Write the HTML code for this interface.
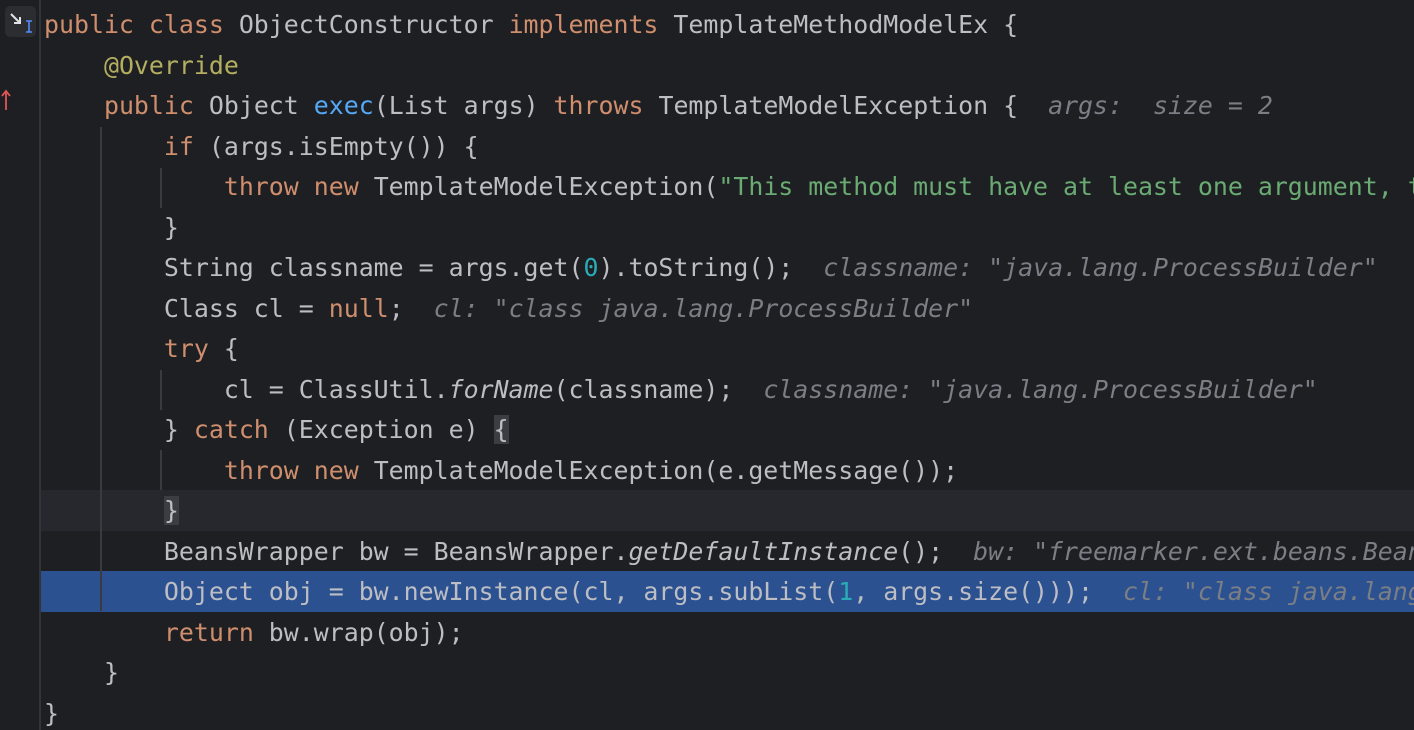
<!DOCTYPE html>
<html><head><meta charset="utf-8"><style>
html,body{margin:0;padding:0;background:#1e1f22;width:1414px;height:730px;overflow:hidden}
body{position:relative;font-family:"DejaVu Sans Mono","Liberation Mono",monospace;font-size:24.9px;color:#bcbec4}
#w{position:absolute;left:0;top:0;width:1414px;height:730px;overflow:hidden}
.l{position:absolute;left:44px;right:0;height:40.5px;line-height:40.5px;white-space:pre;overflow:hidden}
.k{color:#cf8e6d}.f{color:#56a8f5}.s{color:#6aab73}.a{color:#b3ae60}.n{color:#2aacb8}
.i{font-style:italic}.h{color:#7a7e85;font-style:italic}
.bg{position:absolute;left:40px;right:0;height:40.5px}
.g{position:absolute;width:2px;background:#393b40}
</style></head><body><div id="w">
<div class="bg" style="top:490px;background:#26282e"></div>
<div class="bg" style="top:571px;background:#2c5191"></div>
<div class="g" style="left:39px;top:0;height:730px;background:#313438"></div>
<div class="g" style="left:100px;top:127px;height:484px"></div>
<div class="g" style="left:160px;top:168px;height:40px"></div>
<div class="g" style="left:160px;top:370px;height:40px"></div>
<div class="g" style="left:160px;top:450px;height:40px"></div>
<div style="position:absolute;left:5px;top:6px;width:31px;height:31px;background:#2b2d30;border-radius:5px"></div>
<svg style="position:absolute;left:8px;top:10px" width="28" height="26"><path d="M3 4 L12 13 M6 13 H12 V7" stroke="#dfe1e5" stroke-width="2" fill="none"/><path d="M18 11 H24 M21 11 V22 M18 22 H24" stroke="#548af7" stroke-width="1.6" fill="none"/></svg>
<svg style="position:absolute;left:0;top:88px" width="12" height="26"><path d="M6 22 V4 M2 8 L6 3 L10 8" stroke="#e05555" stroke-width="1.8" fill="none"/></svg>
<div class="l" style="top:5px"><span class="k">public class </span>ObjectConstructor <span class="k">implements </span>TemplateMethodModelEx {</div>
<div class="l" style="top:45.5px">    <span class="a">@Override</span></div>
<div class="l" style="top:86px">    <span class="k">public </span>Object <span class="f">exec</span>(List args) <span class="k">throws </span>TemplateModelException {  <span class="h">args:  size = 2</span></div>
<div class="l" style="top:126.5px">        <span class="k">if </span>(args.isEmpty()) {</div>
<div class="l" style="top:167px">            <span class="k">throw new </span>TemplateModelException(<span class="s">"This method must have at least one argument, the name of the class</span></div>
<div class="l" style="top:207.5px">        }</div>
<div class="l" style="top:248px">        String classname = args.get(<span class="n">0</span>).toString();  <span class="h">classname: "java.lang.ProcessBuilder"</span></div>
<div class="l" style="top:288.5px">        Class cl = <span class="k">null</span>;  <span class="h">cl: "class java.lang.ProcessBuilder"</span></div>
<div class="l" style="top:329px">        <span class="k">try </span>{</div>
<div class="l" style="top:369.5px">            cl = ClassUtil.<span class="i">forName</span>(classname);  <span class="h">classname: "java.lang.ProcessBuilder"</span></div>
<div class="l" style="top:410px">        } <span class="k">catch </span>(Exception e) <span style="background:#3b3d42">{</span></div>
<div class="l" style="top:450.5px">            <span class="k">throw new </span>TemplateModelException(e.getMessage());</div>
<div class="l" style="top:491px">        <span style="background:#3b3d42">}</span></div>
<div class="l" style="top:531.5px">        BeansWrapper bw = BeansWrapper.<span class="i">getDefaultInstance</span>();  <span class="h">bw: "freemarker.ext.beans.BeansWrapper@1"</span></div>
<div class="l" style="top:572px">        Object obj = bw.newInstance(cl, args.subList(<span class="n">1</span>, args.size()));  <span class="h">cl: "class java.lang.ProcessBuilder"</span></div>
<div class="l" style="top:612.5px">        <span class="k">return </span>bw.wrap(obj);</div>
<div class="l" style="top:653px">    }</div>
<div class="l" style="top:693.5px">}</div>
</div></body></html>
